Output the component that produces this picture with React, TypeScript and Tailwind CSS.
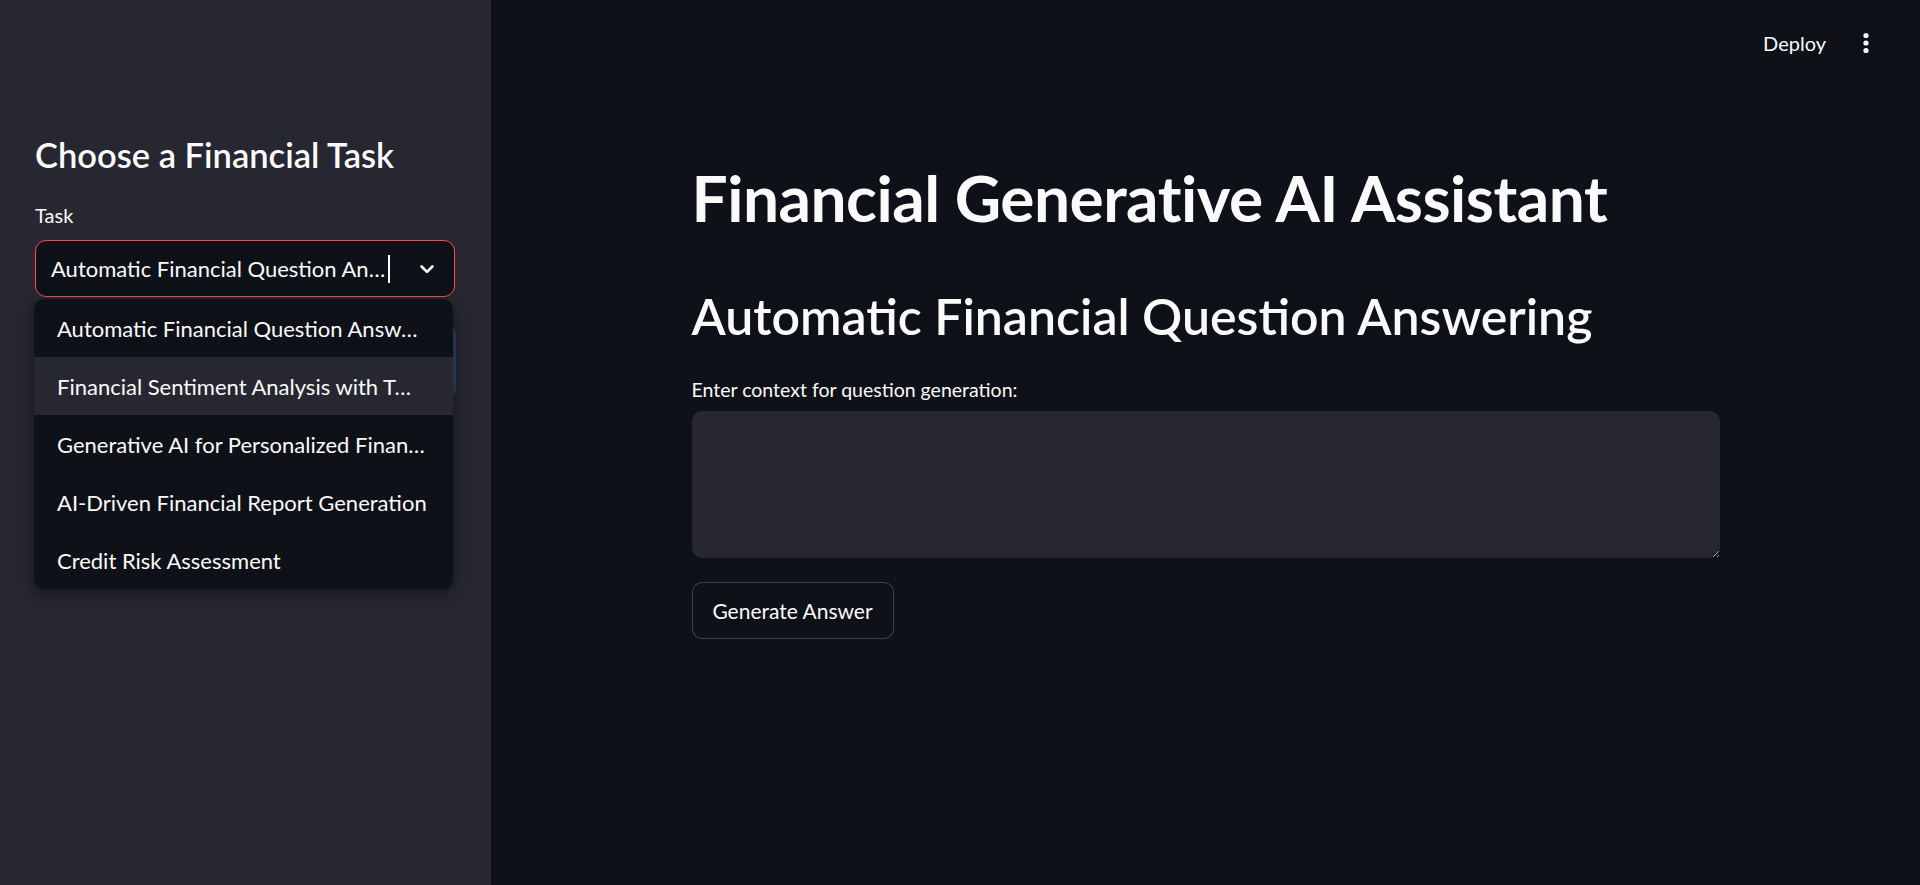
import React from 'react';

const TASKS = [
  'Automatic Financial Question Answ…',
  'Financial Sentiment Analysis with T…',
  'Generative AI for Personalized Finan…',
  'AI-Driven Financial Report Generation',
  'Credit Risk Assessment',
];

function Chevron() {
  return (
    <svg width="20" height="20" viewBox="0 0 24 24" fill="none" stroke="#fafafa" strokeWidth="3.2" strokeLinecap="round" strokeLinejoin="round">
      <path d="M5.5 9l6.5 6.5 6.5-6.5" />
    </svg>
  );
}

function Kebab() {
  return (
    <svg width="8" height="24" viewBox="0 0 8 24" fill="#fafafa">
      <circle cx="4" cy="4.5" r="2.6" />
      <circle cx="4" cy="12" r="2.6" />
      <circle cx="4" cy="19.5" r="2.6" />
    </svg>
  );
}

function Sidebar() {
  return (
    <aside className="w-[491px] shrink-0 bg-[#262730] px-[35px] pt-[134px]">
      <h2 className="text-[34.5px] leading-[1.2] font-semibold text-[#fafafa]">Choose a Financial Task</h2>
      <label className="block mt-[28px] text-[20px] leading-[1.2] text-[#fafafa]">Task</label>
      <div className="relative mt-[13px]">
        {/* Select (focused, open) */}
        <div className="flex items-center h-[57px] w-[420px] rounded-[11px] border border-[#ff4b4b] bg-[#0e1117] pl-[15px] pr-[17px]">
          <span className="text-[22px] text-[#fafafa] whitespace-nowrap">Automatic Financial Question An…</span>
          <span className="ml-[3px] w-[2px] h-[28px] bg-[#fafafa]" />
          <span className="ml-auto flex items-center">
            <Chevron />
          </span>
        </div>

        {/* widget underneath the open menu */}
        <div className="mt-[30px] h-[70px] w-[421px] rounded-[8px] bg-[#2b4262]" />

        {/* Open menu */}
        <ul className="absolute left-[-1px] top-[59px] w-[419px] rounded-[10px] bg-[#0e1117] shadow-[0_4px_16px_rgba(0,0,0,0.45)] overflow-hidden">
          {TASKS.map((t, i) => (
            <li
              key={t}
              className={`h-[58px] flex items-center pl-[23px] text-[22px] text-[#fafafa] whitespace-nowrap ${i === 1 ? 'bg-[#262730]' : ''}`}
            >
              {t}
            </li>
          ))}
        </ul>
      </div>
    </aside>
  );
}

export default function App() {
  return (
    <div className="flex h-screen w-full overflow-hidden bg-[#0e1117] font-['Lato',sans-serif] text-[#fafafa]">
      <Sidebar />
      <main className="flex-1 flex flex-col">
        <header className="flex items-center justify-end h-[86px] pr-[50px] gap-[36px]">
          <span className="text-[20px] text-[#fafafa]">Deploy</span>
          <Kebab />
        </header>
        <div className="w-[1028px] mx-auto">
          <h1 className="mt-[74px] text-[64px] leading-[1.2] font-bold tracking-[-0.5px]">Financial Generative AI Assistant</h1>
          <h2 className="mt-[49px] text-[50px] leading-[1.2] font-semibold">Automatic Financial Question Answering</h2>
          <label className="block mt-[32px] text-[19.5px] leading-[1.2]">Enter context for question generation:</label>
          <textarea
            className="block mt-[10px] w-full h-[147px] rounded-[10px] bg-[#262730] outline-none resize-y p-4 text-[20px]"
            defaultValue=""
          />
          <button className="mt-[24px] h-[57px] w-[202px] rounded-[10px] border border-[rgba(250,250,250,0.2)] bg-[#0e1117] text-[21px] text-[#fafafa]">
            Generate Answer
          </button>
        </div>
      </main>
    </div>
  );
}
